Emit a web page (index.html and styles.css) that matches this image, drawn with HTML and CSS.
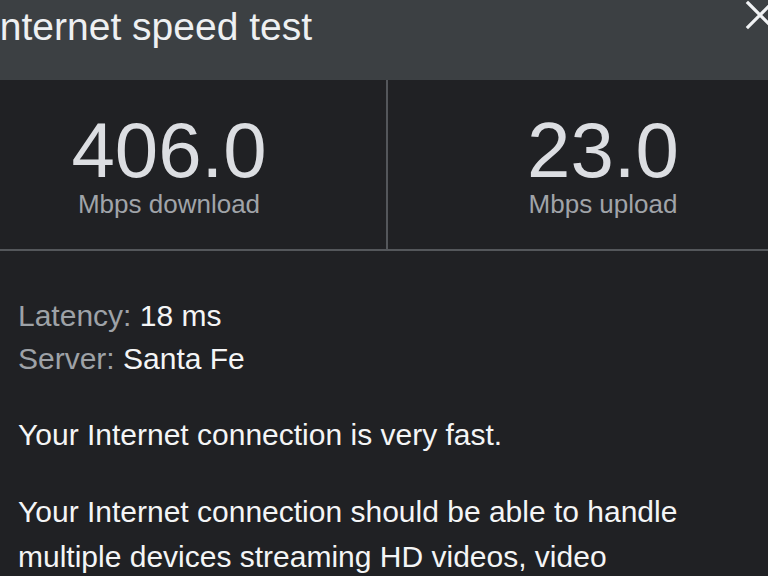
FILE: index.html
```html
<!DOCTYPE html>
<html lang="en">
<head>
<meta charset="utf-8">
<title>Internet speed test</title>
<link rel="stylesheet" href="styles.css">
</head>
<body>
<div class="dialog">
  <header class="header">
    <h1 class="title">Internet speed test</h1>
    <button class="close" aria-label="Close">
      <svg viewBox="0 0 30 30" width="30" height="30"><path d="M3 3L27 27M27 3L3 27" stroke="#f0f2f4" stroke-width="3.2" stroke-linecap="square" fill="none"/></svg>
    </button>
  </header>
  <section class="stats">
    <div class="stat">
      <div class="value">406.0</div>
      <div class="unit">Mbps download</div>
    </div>
    <div class="stat stat-right">
      <div class="value">23.0</div>
      <div class="unit">Mbps upload</div>
    </div>
  </section>
  <section class="info">
    <div class="meta">
      <div class="meta-row"><span class="meta-label">Latency:</span> <span class="meta-value">18 ms</span></div>
      <div class="meta-row"><span class="meta-label">Server:</span> <span class="meta-value">Santa Fe</span></div>
    </div>
    <p class="para">Your Internet connection is very fast.</p>
    <p class="para">Your Internet connection should be able to handle multiple devices streaming HD videos, video conferencing and gaming at the same time.</p>
  </section>
</div>
</body>
</html>
```

FILE: styles.css
```css
html, body {
  margin: 0;
  padding: 0;
  background: #202124;
  overflow: hidden;
  height: 576px;
}
body {
  font-family: "Liberation Sans", Arial, sans-serif;
  color: #e8eaed;
}
.dialog {
  width: 866px;
  margin-left: -48px;
  background: #202124;
}
.header {
  height: 80px;
  box-sizing: border-box;
  background: #3c4043;
  display: flex;
  align-items: flex-start;
  justify-content: space-between;
  padding: 7px 43px 0 37px;
}
.title {
  margin: 0;
  font-size: 39px;
  line-height: 39px;
  font-weight: normal;
  color: #eef0f2;
}
.close {
  margin-top: -7px;
  padding: 0;
  border: 0;
  background: none;
  width: 30px;
  height: 30px;
  display: block;
}
.close svg { display: block; }
.stats {
  display: grid;
  grid-template-columns: 434px 432px;
  border-bottom: 2px solid #54575b;
}
.stat {
  height: 169px;
  box-sizing: border-box;
  padding-top: 31px;
  display: flex;
  flex-direction: column;
  align-items: center;
}
.stat-right {
  border-left: 2px solid #54575b;
}
.value {
  font-size: 78px;
  line-height: 79px;
  color: #dcdee2;
}
.unit {
  font-size: 26px;
  line-height: 28px;
  color: #a0a4a9;
}
.info {
  padding: 43px 66px 0 66px;
}
.meta-row {
  font-size: 30px;
  line-height: 43px;
}
.meta-label { color: #9ea2a7; }
.meta-value { color: #f4f5f6; }
.para {
  margin: 32px 0 0 0;
  font-size: 30px;
  line-height: 45px;
  color: #f4f5f6;
}
```
